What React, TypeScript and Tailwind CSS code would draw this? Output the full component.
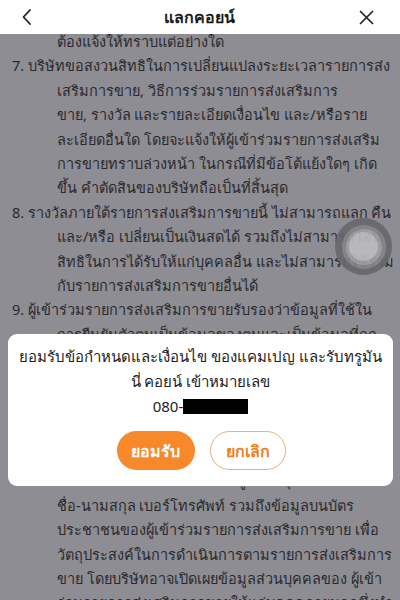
import React from "react";

const lines: { t: string; indent: boolean }[] = [
  { t: "ต้องแจ้งให้ทราบแต่อย่างใด", indent: true },
  { t: "7. บริษัทขอสงวนสิทธิในการเปลี่ยนแปลงระยะเวลารายการส่ง", indent: false },
  { t: "เสริมการขาย, วิธีการร่วมรายการส่งเสริมการ", indent: true },
  { t: "ขาย, รางวัล และรายละเอียดเงื่อนไข และ/หรือราย", indent: true },
  { t: "ละเอียดอื่นใด โดยจะแจ้งให้ผู้เข้าร่วมรายการส่งเสริม", indent: true },
  { t: "การขายทราบล่วงหน้า ในกรณีที่มีข้อโต้แย้งใดๆ เกิด", indent: true },
  { t: "ขึ้น คำตัดสินของบริษัทถือเป็นที่สิ้นสุด", indent: true },
  { t: "8. รางวัลภายใต้รายการส่งเสริมการขายนี้ ไม่สามารถแลก คืน", indent: false },
  { t: "และ/หรือ เปลี่ยนเป็นเงินสดได้ รวมถึงไม่สามารถโอน", indent: true },
  { t: "สิทธิในการได้รับให้แก่บุคคลอื่น และไม่สามารถใช้ร่วม", indent: true },
  { t: "กับรายการส่งเสริมการขายอื่นได้", indent: true },
  { t: "9. ผู้เข้าร่วมรายการส่งเสริมการขายรับรองว่าข้อมูลที่ใช้ใน", indent: false },
  { t: "การยืนยันตัวตนเป็นข้อมูลของตนและเป็นข้อมูลที่ถูก", indent: true },
  { t: "ต้อง หากบริษัทตรวจสอบพบว่าข้อมูลดังกล่าวเป็น", indent: true },
  { t: "เท็จ บริษัทขอสงวนสิทธิในการยกเลิกการมอบรางวัล", indent: true },
  { t: "10. ผู้เข้าร่วมรายการส่งเสริมการขายรับทราบว่าบริษัท", indent: false },
  { t: "มีความจำเป็นในการเก็บรวบรวมข้อมูล และมีความ", indent: true },
  { t: "ต้องใช้ข้อมูลดังกล่าว เพื่อการยืนยันตัวตนซึ่งมีความ", indent: true },
  { t: "จำเป็นที่จะต้องประมวลผลข้อมูลส่วนบุคคล อาทิเช่น", indent: true },
  { t: "ชื่อ-นามสกุล เบอร์โทรศัพท์ รวมถึงข้อมูลบนบัตร", indent: true },
  { t: "ประชาชนของผู้เข้าร่วมรายการส่งเสริมการขาย เพื่อ", indent: true },
  { t: "วัตถุประสงค์ในการดำเนินการตามรายการส่งเสริมการ", indent: true },
  { t: "ขาย โดยบริษัทอาจเปิดเผยข้อมูลส่วนบุคคลของ ผู้เข้า", indent: true },
  { t: "ร่วมรายการส่งเสริมการขายให้แก่บุคคลภายนอกซึ่งทำ", indent: true },
];

export default function App() {
  return (
    <div
      className="relative w-[400px] h-[600px] overflow-hidden bg-[#8e8d93]"
      style={{ fontFamily: '"Noto Sans", "Liberation Sans", "DejaVu Sans", sans-serif' }}
    >
      {/* header */}
      <div className="relative z-10 h-[34px] bg-white flex items-center justify-between pl-[21px] pr-[26px]">
        <svg width="12" height="18" viewBox="0 0 12 18" className="text-[#222]">
          <path d="M9 2 L2.5 9 L9 16" fill="none" stroke="currentColor" strokeWidth="1.8" strokeLinecap="round" strokeLinejoin="round" />
        </svg>
        <div className="text-[16px] font-bold text-[#1a1a1a] ml-[6px]">แลกคอยน์</div>
        <svg width="15" height="15" viewBox="0 0 15 15" className="text-[#222]">
          <path d="M1.5 1.5 L13.5 13.5 M13.5 1.5 L1.5 13.5" fill="none" stroke="currentColor" strokeWidth="1.7" strokeLinecap="round" />
        </svg>
      </div>

      {/* content */}
      <div className="mt-[-5px] text-[14.5px] leading-[24.4px] text-[#2a2a2c]">
        {lines.map((l, i) => (
          <div key={i} className={`whitespace-nowrap ${l.indent ? "pl-[57px]" : "pl-[12px]"}`}>
            {l.t}
          </div>
        ))}
      </div>

      {/* assistive touch */}
      <div className="absolute left-[335px] top-[218px] w-[57px] h-[57px] rounded-full bg-[#68676c] flex items-center justify-center opacity-90">
        <div className="w-[44px] h-[44px] rounded-full bg-[#85848a] flex items-center justify-center">
          <div className="w-[36px] h-[36px] rounded-full bg-[#a09fa4] flex items-center justify-center">
            <div className="w-[29px] h-[29px] rounded-full bg-[#bdbcc0]" />
          </div>
        </div>
      </div>

      {/* modal */}
      <div className="absolute left-[8px] top-[334px] w-[385px] h-[152px] bg-white rounded-[9px] flex flex-col items-center pt-[10px]">
        <div className="text-[15px] leading-[25px] text-[#222] text-center whitespace-nowrap">
          <div>ยอมรับข้อกำหนดและเงื่อนไข ของแคมเปญ และรับทรูมัน</div>
          <div>นี่ คอยน์ เข้าหมายเลข</div>
          <div className="flex items-center justify-center">
            <span>080-</span>
            <span className="inline-block w-[65px] h-[15px] bg-black" />
          </div>
        </div>
        <div className="flex gap-[15px] mt-[12px] ml-[1px]">
          <button className="w-[78px] h-[39px] rounded-full bg-[#f7892b] text-white text-[16px] font-bold">ยอมรับ</button>
          <button className="w-[76px] h-[39px] rounded-full border border-[#eab07a] text-[#f07f1c] text-[16px] font-bold bg-white">ยกเลิก</button>
        </div>
      </div>
    </div>
  );
}
